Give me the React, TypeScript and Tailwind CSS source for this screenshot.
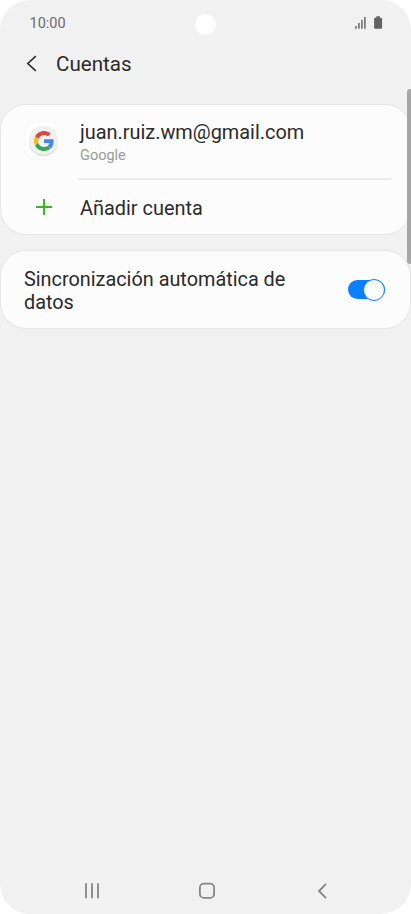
import React, { useState } from "react";

const SignalIcon = () => (
  <svg width="12" height="13" viewBox="0 0 12 13" fill="#7d7d7d">
    <rect x="0" y="10" width="1.8" height="2.7" />
    <rect x="3" y="7" width="1.8" height="5.7" />
    <rect x="6" y="4" width="1.8" height="8.7" />
    <rect x="9" y="1" width="1.8" height="11.7" />
  </svg>
);

const BatteryIcon = () => (
  <svg width="9" height="13" viewBox="0 0 9 13" fill="#636363">
    <path d="M2.3 0.3h3.6v1.5h1.2a1 1 0 0 1 1 1v9a1 1 0 0 1-1 1h-6a1 1 0 0 1-1-1v-9a1 1 0 0 1 1-1h1.2z" />
  </svg>
);

const GoogleLogo = () => (
  <svg width="20" height="20" viewBox="0 0 48 48">
    <path
      fill="#EA4335"
      d="M24 9.5c3.54 0 6.71 1.22 9.21 3.6l6.85-6.85C35.9 2.38 30.47 0 24 0 14.62 0 6.51 5.38 2.56 13.22l7.98 6.19C12.43 13.72 17.74 9.5 24 9.5z"
    />
    <path
      fill="#4285F4"
      d="M46.98 24.55c0-1.57-.15-3.09-.38-4.55H24v9.02h12.94c-.58 2.96-2.26 5.48-4.78 7.18l7.73 6c4.51-4.18 7.09-10.36 7.09-17.65z"
    />
    <path
      fill="#FBBC05"
      d="M10.53 28.59c-.48-1.45-.76-2.99-.76-4.59s.27-3.14.76-4.59l-7.98-6.19C.92 16.46 0 20.12 0 24c0 3.88.92 7.54 2.56 10.78l7.97-6.19z"
    />
    <path
      fill="#34A853"
      d="M24 48c6.48 0 11.93-2.13 15.89-5.81l-7.73-6c-2.15 1.45-4.92 2.3-8.16 2.3-6.26 0-11.57-4.22-13.47-9.91l-7.98 6.19C6.51 42.62 14.62 48 24 48z"
    />
  </svg>
);

const StatusBar = () => (
  <div className="relative flex h-[46px] items-start justify-between pl-[29.5px] pr-7">
    <span className="mt-[14px] text-[14.5px] leading-5 text-[#6b6b6b]">
      10:00
    </span>
    <div className="absolute left-[194.5px] top-[13.5px] h-[21px] w-[21px] rounded-full bg-white" />
    <div className="mt-4 flex items-center gap-[7px]">
      <SignalIcon />
      <BatteryIcon />
    </div>
  </div>
);

const Header = () => (
  <header className="flex h-[58px] items-start">
    <button aria-label="Atrás" className="ml-[26px] mt-[9px]">
      <svg
        width="12"
        height="18"
        viewBox="0 0 12 18"
        fill="none"
        stroke="#2b2b2b"
        strokeWidth="1.6"
      >
        <path d="M9.8 1.1L1.8 8.5l8 7.4" />
      </svg>
    </button>
    <h1 className="ml-[18px] mt-[5px] text-[20.6px] leading-[26px]">Cuentas</h1>
  </header>
);

const Accounts = () => (
  <section className="h-[131px] rounded-[26px] border border-[#e6e6e6] bg-[#fcfcfc] pl-[23px]">
    <div className="flex h-[73px] pt-4">
      <div className="flex h-[39px] w-[39px] items-center justify-center rounded-[12px] border border-[#f7f7f7] bg-white">
        <div className="flex h-[29px] w-[29px] items-center justify-center rounded-full bg-[#f1f1f1] shadow-[0_1px_1px_#cfcfcf]">
          <GoogleLogo />
        </div>
      </div>
      <div className="ml-[17px]">
        <div className="text-[19.9px] leading-6">juan.ruiz.wm@gmail.com</div>
        <div className="mt-px text-[14.5px] leading-5 text-[#999999]">
          Google
        </div>
      </div>
    </div>
    <div className="ml-[54px] mr-[19px] h-[2px] bg-[#ebebeb]" />
    <div className="flex h-[54px] items-center">
      <svg
        className="ml-3"
        width="16"
        height="16"
        viewBox="0 0 16 16"
        stroke="#35bc1b"
        strokeWidth="2"
      >
        <path d="M8 0v16M0 8h16" />
      </svg>
      <span className="ml-7 pt-[3px] text-[19.9px] leading-6">
        Añadir cuenta
      </span>
    </div>
  </section>
);

const SyncSetting = () => {
  const [enabled, setEnabled] = useState(true);

  return (
    <section className="mt-[15px] flex h-[79px] items-center justify-between rounded-[26px] border border-[#e6e6e6] bg-[#fcfcfc] pl-[23px] pr-[25.5px]">
      <span className="w-[280px] pt-0.5 text-[19.85px] leading-[23px]">
        Sincronización automática de datos
      </span>
      <button
        role="switch"
        aria-checked={enabled}
        aria-label="Sincronización automática de datos"
        onClick={() => setEnabled(!enabled)}
        className={`flex h-[19px] w-[37px] items-center rounded-full ${
          enabled ? "justify-end bg-[#0a80ff]" : "justify-start bg-[#a0a0a0]"
        }`}
      >
        <span className="h-[22px] w-[22px] shrink-0 rounded-full border border-[#0a80ff] bg-[#fcfcfc]" />
      </button>
    </section>
  );
};

const NavigationBar = () => (
  <nav className="mt-auto flex h-[47px] items-center pl-[84px]">
    <svg width="16" height="16" viewBox="0 0 16 16" stroke="#858585" strokeWidth="1.8">
      <path d="M2 .3v15M8 .3v15M14 .3v15" />
    </svg>
    <svg
      className="ml-[98px]"
      width="18"
      height="18"
      viewBox="0 0 18 18"
      fill="none"
      stroke="#858585"
      strokeWidth="1.8"
    >
      <rect x="1.9" y="1.7" width="14.2" height="14.2" rx="4" />
    </svg>
    <svg
      className="ml-[101px]"
      width="11"
      height="16"
      viewBox="0 0 11 16"
      fill="none"
      stroke="#858585"
      strokeWidth="1.8"
    >
      <path d="M9 .9L2 8l7 7.1" />
    </svg>
  </nav>
);

const App = () => {
  return (
    <div className="h-[914px] w-[411px] overflow-hidden bg-white font-['Roboto',sans-serif] text-[#2b2b2b]">
      <div className="relative flex h-full flex-col rounded-[30px] bg-[#f1f1f1]">
        <StatusBar />
        <Header />
        <Accounts />
        <SyncSetting />
        <NavigationBar />
        <div className="absolute right-0 top-[89px] h-[175px] w-1 rounded-l-[3px] bg-[#a6a6a6]" />
      </div>
    </div>
  );
};

export default App;
